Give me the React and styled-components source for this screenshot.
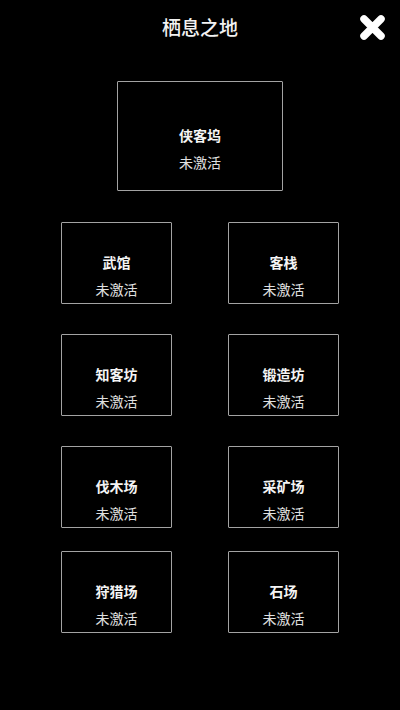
import React from "react";
import styled, { createGlobalStyle } from "styled-components";

const Global = createGlobalStyle`
  html, body { margin: 0; padding: 0; background: #000; }
  body { font-family: "Noto Sans CJK SC", "Noto Sans", sans-serif; }
`;

const Page = styled.div`
  width: 400px;
  min-height: 710px;
  background: #000;
  color: #fff;
  display: flex;
  flex-direction: column;
  align-items: center;
`;

const Header = styled.header`
  width: 100%;
  height: 54px;
  display: grid;
  grid-template-columns: 1fr auto 1fr;
  align-items: center;
`;

const Title = styled.h1`
  grid-column: 2;
  margin: 0;
  font-size: 19px;
  line-height: 24px;
  font-weight: 500;
  color: #f2f2f2;
`;

const Close = styled.button`
  grid-column: 3;
  justify-self: end;
  margin-right: 14px;
  width: 27px;
  height: 27px;
  padding: 0;
  border: 0;
  background: transparent;
  display: flex;
  align-items: center;
  justify-content: center;
  cursor: pointer;
`;

const Card = styled.div`
  box-sizing: border-box;
  width: ${(p) => (p.$wide ? "166px" : "111px")};
  height: ${(p) => (p.$wide ? "110px" : "82px")};
  border: 1px solid #a3a3a3;
  border-radius: 1px;
  display: flex;
  flex-direction: column;
  align-items: center;
  justify-content: center;
  gap: 7px;
  padding-top: 25px;
`;

const Name = styled.div`
  font-size: 14px;
  line-height: 20px;
  font-weight: 700;
  color: #f4f4f4;
`;

const Status = styled.div`
  font-size: 14px;
  line-height: 20px;
  font-weight: 400;
  color: #e0e0e0;
`;

const TopSlot = styled.div`
  margin-top: 27px;
`;

const Rows = styled.div`
  display: flex;
  flex-direction: column;
  align-items: center;
`;

const Row = styled.div`
  display: flex;
  gap: 56px;
  margin-top: ${(p) => p.$gap}px;
`;

const CloseIcon = () => (
  <svg width="27" height="27" viewBox="0 0 27 27">
    <path
      d="M5 5 L22 22 M22 5 L5 22"
      stroke="#fff"
      strokeWidth="7.5"
      strokeLinecap="round"
      fill="none"
    />
  </svg>
);

const Building = ({ name, wide }) => (
  <Card $wide={wide}>
    <Name>{name}</Name>
    <Status>未激活</Status>
  </Card>
);

const rows = [
  { gap: 31, items: ["武馆", "客栈"] },
  { gap: 30, items: ["知客坊", "锻造坊"] },
  { gap: 30, items: ["伐木场", "采矿场"] },
  { gap: 23, items: ["狩猎场", "石场"] },
];

export default function App() {
  return (
    <>
      <Global />
      <Page>
        <Header>
          <Title>栖息之地</Title>
          <Close aria-label="关闭">
            <CloseIcon />
          </Close>
        </Header>
        <TopSlot>
          <Building name="侠客坞" wide />
        </TopSlot>
        <Rows>
          {rows.map((r, i) => (
            <Row key={i} $gap={r.gap}>
              {r.items.map((n) => (
                <Building key={n} name={n} />
              ))}
            </Row>
          ))}
        </Rows>
      </Page>
    </>
  );
}
